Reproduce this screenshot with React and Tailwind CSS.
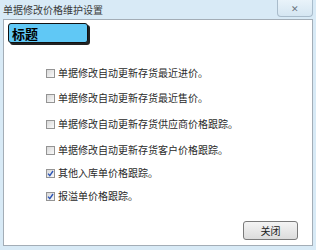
import React, { useState } from 'react';

const font = { fontFamily: '"Noto Sans CJK SC", "Liberation Sans", sans-serif' };

const options = [
  { label: '单据修改自动更新存货最近进价。', checked: false, mt: 'mt-[23px]' },
  { label: '单据修改自动更新存货最近售价。', checked: false, mt: 'mt-[11px]' },
  { label: '单据修改自动更新存货供应商价格跟踪。', checked: false, mt: 'mt-[12px]' },
  { label: '单据修改自动更新存货客户价格跟踪。', checked: false, mt: 'mt-[12px]' },
  { label: '其他入库单价格跟踪。', checked: true, mt: 'mt-[9px]' },
  { label: '报溢单价格跟踪。', checked: true, mt: 'mt-[9px]' },
];

function CheckRow({ label, checked, mt, onToggle }) {
  return (
    <label className={`flex items-center h-[14px] ml-[42px] ${mt} cursor-default`} onClick={onToggle}>
      <span className="w-[9px] h-[9px] border border-[#949494] bg-gradient-to-br from-[#d8d8d8] to-[#fafafa] flex items-center justify-center">
        {checked && (
          <svg width="7" height="7" viewBox="0 0 7 7">
            <path d="M1 3.6 L2.8 5.6 L6 1" fill="none" stroke="#2b55b8" strokeWidth="1.4" />
          </svg>
        )}
      </span>
      <span className="ml-[3px] text-[10px] leading-[14px] text-[#2a2a2a]">{label}</span>
    </label>
  );
}

export default function App() {
  const [items, setItems] = useState(options);

  const toggle = (i) => {
    setItems((prev) => prev.map((it, idx) => (idx === i ? { ...it, checked: !it.checked } : it)));
  };

  return (
    <div className="w-[316px] h-[250px] bg-[#d8eaf6] flex flex-col overflow-hidden" style={font}>
      {/* title bar */}
      <div className="h-[19px] flex items-start justify-between shrink-0">
        <div className="pl-[3px] pt-[3px] text-[10px] leading-[13px] text-[#3a3a3a]">单据修改价格维护设置</div>
        <button className="w-[36px] h-[17px] mr-[3px] rounded-b-[4px] border border-t-0 border-[#a9bccb] bg-gradient-to-b from-[#e9f3fa] to-[#d5e6f2] flex items-center justify-center">
          <span className="text-[9px] leading-none text-[#6b7580]">✕</span>
        </button>
      </div>

      {/* client area */}
      <div className="flex-1 mx-[3px] mb-[4px] bg-white border border-[#a3adb6] flex flex-col">
        <div className="ml-[4px] mt-[3px] w-[80px] h-[20px] bg-[#60c8f5] border-[1.5px] border-[#111] rounded-[3px] shadow-[2px_2px_0_#222] flex items-center pl-[3px]">
          <span className="text-[13px] font-bold leading-none text-black">标题</span>
        </div>

        {items.map((it, i) => (
          <CheckRow key={i} {...it} onToggle={() => toggle(i)} />
        ))}

        <div className="flex-1 flex items-end justify-end pr-[14px] pb-[5px]">
          <button className="w-[55px] h-[19px] rounded-[3px] border border-[#7a7a7a] bg-gradient-to-b from-[#f4f4f4] to-[#dcdcdc] text-[10px] leading-none text-[#222]">
            关闭
          </button>
        </div>
      </div>
    </div>
  );
}
